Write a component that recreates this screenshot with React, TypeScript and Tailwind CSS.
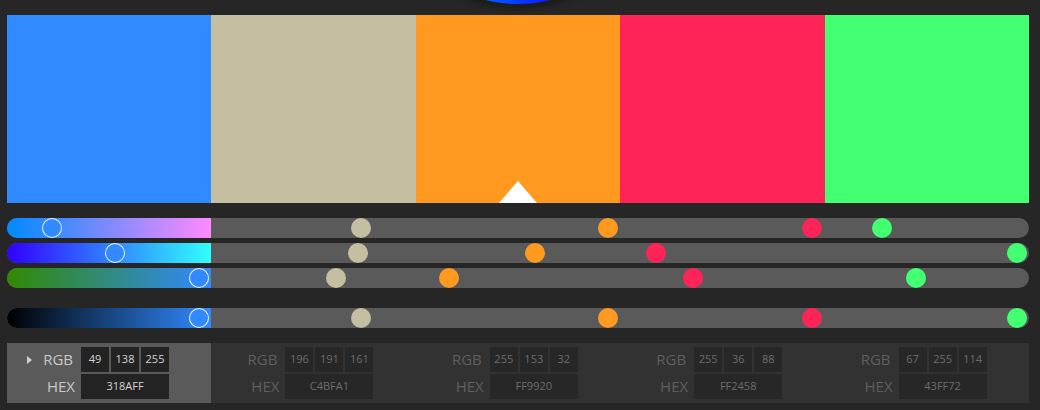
const swatches = [
  { r: 49, g: 138, b: 255, hex: "318AFF" },
  { r: 196, g: 191, b: 161, hex: "C4BFA1" },
  { r: 255, g: 153, b: 32, hex: "FF9920" },
  { r: 255, g: 36, b: 88, hex: "FF2458" },
  { r: 67, g: 255, b: 114, hex: "43FF72" },
];

const SEG = 1022 / 5;
const selected = 0;

function thumbLeft(i: number, v: number) {
  return i * SEG + 10 + (v / 255) * 182 - 10;
}

function Slider({
  gradient,
  values,
}: {
  gradient: string;
  values: (s: (typeof swatches)[number]) => number;
}) {
  return (
    <div className="relative h-5 rounded-full bg-[#5a5a5a] flex">
      <div className="w-1/5 h-5 rounded-l-full" style={{ background: gradient }}></div>
      {swatches.map((s, i) => (
        <div
          key={s.hex}
          className={
            i === selected
              ? "absolute top-0 w-5 h-5 rounded-full border-[1.5px] border-white/90"
              : "absolute top-0 w-5 h-5 rounded-full"
          }
          style={{ left: thumbLeft(i, values(s)), background: "#" + s.hex }}
        ></div>
      ))}
    </div>
  );
}

function ColorInfo({ s, active }: { s: (typeof swatches)[number]; active: boolean }) {
  const label = active ? "text-[#c9c9c9]" : "text-[#5f5f5f]";
  const box = active
    ? "bg-[#232323] text-[#d4d4d4] text-[11px] flex items-center justify-center"
    : "bg-[#272727] text-[#6c6c6c] text-[11px] flex items-center justify-center";
  return (
    <div className={active ? "w-1/5 bg-[#5a5a5a] pt-1 pb-1" : "w-1/5 pt-1 pb-1"}>
      <div className="flex items-center h-[25px]">
        <div className={`w-[68px] flex items-center justify-end gap-[11px] pr-[2px] text-[15px] ${label}`}>
          {active && (
            <span className="w-0 h-0 border-t-[4px] border-b-[4px] border-l-[5px] border-t-transparent border-b-transparent border-l-[#d0d0d0]"></span>
          )}
          RGB
        </div>
        <div className="ml-[6px] flex gap-[2px]">
          <div className={`w-7 h-[25px] ${box}`}>{s.r}</div>
          <div className={`w-7 h-[25px] ${box}`}>{s.g}</div>
          <div className={`w-7 h-[25px] ${box}`}>{s.b}</div>
        </div>
      </div>
      <div className="flex items-center h-[25px] mt-[2px]">
        <div className={`w-[68px] text-right text-[15px] ${label}`}>HEX</div>
        <div className={`ml-[6px] w-[88px] h-[25px] ${box}`}>{s.hex}</div>
      </div>
    </div>
  );
}

export default function App() {
  const c = swatches[selected];
  return (
    <div
      className="relative w-[1040px] h-[410px] overflow-hidden bg-[#262626] pt-[15px] pl-[7px] pr-[11px]"
      style={{ fontFamily: '"Open Sans", "Noto Sans", sans-serif' }}
    >
      <div className="absolute left-[384px] top-[-264px] w-[268px] h-[268px] rounded-full bg-[linear-gradient(90deg,#00a0ff_20%,#0060ff_37%,#1010ff_64%,#2000ff)] shadow-[0_0_0_4px_#1d1d1d,0_0_6px_5px_rgba(0,0,0,0.25)]"></div>

      <div className="flex h-[188px]">
        {swatches.map((s, i) => (
          <div key={s.hex} className="relative flex-1" style={{ background: "#" + s.hex }}>
            {i === 2 && (
              <div className="absolute bottom-0 left-1/2 -translate-x-1/2 w-0 h-0 border-l-[19px] border-r-[19px] border-b-[22px] border-l-transparent border-r-transparent border-b-white"></div>
            )}
          </div>
        ))}
      </div>

      <div className="mt-[15px] flex flex-col gap-[5px]">
        <Slider
          gradient={`linear-gradient(90deg, rgb(0,${c.g},${c.b}), rgb(255,${c.g},${c.b}))`}
          values={(s) => s.r}
        />
        <Slider
          gradient={`linear-gradient(90deg, rgb(${c.r},0,${c.b}), rgb(${c.r},255,${c.b}))`}
          values={(s) => s.g}
        />
        <Slider
          gradient={`linear-gradient(90deg, rgb(${c.r},${c.g},0), rgb(${c.r},${c.g},255))`}
          values={(s) => s.b}
        />
        <div className="mt-[15px]">
          <Slider
            gradient={`linear-gradient(90deg, #000, #${c.hex})`}
            values={(s) => Math.max(s.r, s.g, s.b)}
          />
        </div>
      </div>

      <div className="mt-[15px] h-[60px] flex bg-[#323232]">
        {swatches.map((s, i) => (
          <ColorInfo key={s.hex} s={s} active={i === selected} />
        ))}
      </div>
    </div>
  );
}
